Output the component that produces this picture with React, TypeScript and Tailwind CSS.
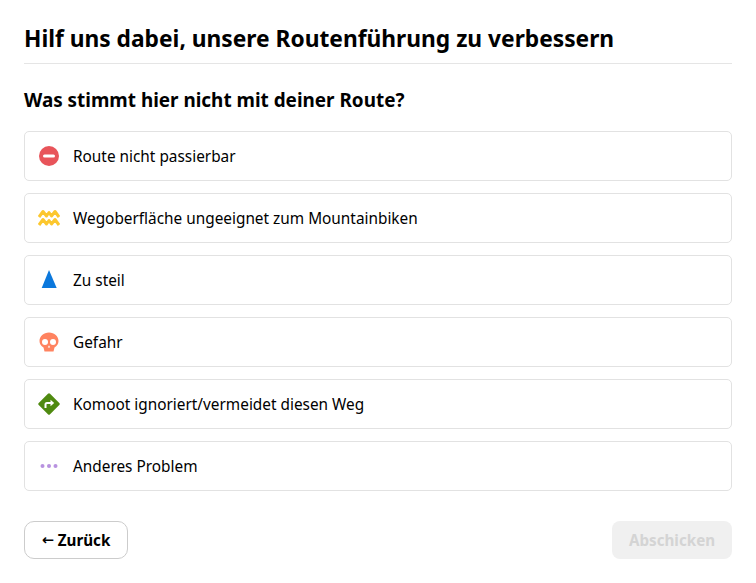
import React from "react";

const Stop = () => (
  <svg width="20" height="20" viewBox="0 0 20 20"><circle cx="10" cy="10" r="10" fill="#e8545a" /><rect x="4" y="8.5" width="12" height="3" rx="1.5" fill="#fff" /></svg>
);
const Waves = () => (
  <svg width="22" height="20" viewBox="0 0 22 20" fill="none" stroke="#fcc72e" strokeWidth="3" strokeLinejoin="round">
    <path d="M1 9 L5 3.5 L8.5 8 L11 4.5 L13.5 8 L17 3.5 L21 9" />
    <path d="M1 17 L5 11.5 L8.5 16 L11 12.5 L13.5 16 L17 11.5 L21 17" />
  </svg>
);
const Peak = () => (
  <svg width="20" height="20" viewBox="0 0 20 20"><path d="M10 0 L17.7 18 H2.7 Z" fill="#0b78dc" /></svg>
);
const Skull = () => (
  <svg width="20" height="20" viewBox="0 0 20 20">
    <path d="M10 0.5 C4.6 0.5 0.5 4.2 0.5 9 C0.5 12 2 14.2 4.5 15.4 L5.5 19.5 H14.5 L15.5 15.4 C18 14.2 19.5 12 19.5 9 C19.5 4.2 15.4 0.5 10 0.5 Z" fill="#ff8360" />
    <circle cx="6" cy="10" r="3" fill="#fff" />
    <circle cx="14" cy="10" r="3" fill="#fff" />
    <path d="M10 13.2 L11.2 15.4 H8.8 Z" fill="#fff" />
  </svg>
);
const Turn = () => (
  <svg width="22" height="22" viewBox="0 0 22 22">
    <rect x="3" y="3" width="16" height="16" rx="1.5" transform="rotate(45 11 11)" fill="#4f8a10" />
    <path d="M7.5 15 V11.5 Q7.5 10 9 10 H13" fill="none" stroke="#fff" strokeWidth="2" />
    <path d="M12.5 6.8 L16.2 10 L12.5 13.2 Z" fill="#fff" />
  </svg>
);
const Dots = () => (
  <svg width="20" height="20" viewBox="0 0 20 20" fill="#b892e0">
    <circle cx="3.5" cy="10" r="2" /><circle cx="10" cy="10" r="2" /><circle cx="16.5" cy="10" r="2" />
  </svg>
);

const rows: [React.ReactNode, string][] = [
  [<Stop />, "Route nicht passierbar"],
  [<Waves />, "Wegoberfläche ungeeignet zum Mountainbiken"],
  [<Peak />, "Zu steil"],
  [<Skull />, "Gefahr"],
  [<Turn />, "Komoot ignoriert/vermeidet diesen Weg"],
  [<Dots />, "Anderes Problem"],
];

export default function App() {
  return (
    <div className="w-[756px] h-[583px] bg-white px-6 pt-6 text-black font-['Noto_Sans',sans-serif] overflow-hidden">
      <h1 className="text-[22.75px] leading-[28px] font-bold pt-[1px] pb-[10px] border-b border-[#e5e5e5] whitespace-nowrap">
        Hilf uns dabei, unsere Routenführung zu verbessern
      </h1>
      <h2 className="text-[18.9px] leading-6 font-bold mt-[24px] mb-[19px]">Was stimmt hier nicht mit deiner Route?</h2>
      <div className="flex flex-col gap-3">
        {rows.map(([icon, label]) => (
          <div key={label} className="h-[50px] flex items-center border border-[#e2e2e2] rounded-[5px] pl-[13px]">
            <span className="w-[22px] h-[22px] flex items-center justify-center shrink-0">{icon}</span>
            <span className="ml-[13px] pt-[2px] text-[15.37px]">{label}</span>
          </div>
        ))}
      </div>
      <div className="flex justify-between mt-[30px]">
        <button className="w-[104px] h-[38px] rounded-[10px] border border-[#cccccc] bg-white text-[15.2px] font-bold flex items-center justify-center gap-1 pt-[1px]">
          <span className="font-['DejaVu_Sans',sans-serif] text-[14.5px] leading-none">←</span>
          <span>Zurück</span>
        </button>
        <button className="w-[120px] h-[38px] rounded-[8px] bg-[#f0f0f0] text-[#d4d4d4] text-[15.2px] font-bold pt-[1px]">Abschicken</button>
      </div>
    </div>
  );
}
